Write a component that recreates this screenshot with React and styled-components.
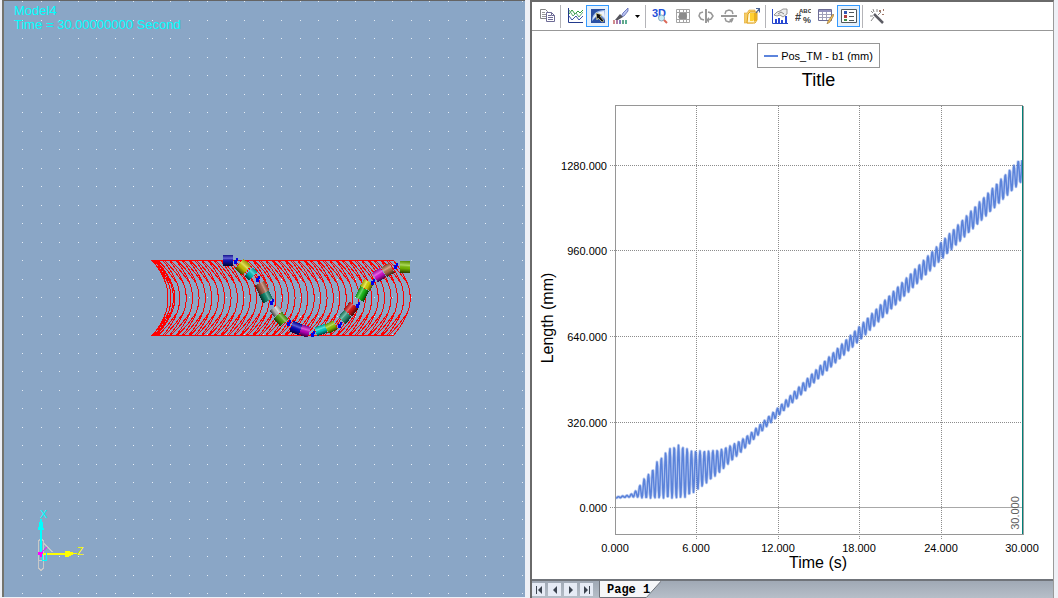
import React from 'react';
import styled, { createGlobalStyle } from 'styled-components';

const App = () => {
    return (
        <>
            <GlobalStyle />
            <Workspace>
                <ModelView />
                <PlotView />
            </Workspace>
        </>
    )
}

export default App;

/* ---------- model view ---------- */

const gridDots = [];
for (let row = 0; row < 33; row++) {
    for (let col = 0; col < 28; col++) {
        gridDots.push([Math.floor(22.5 + col * 18.5), Math.floor(1.5 + row * 18.5)]);
    }
}

// one turn of the helix: both strands share the middle and part towards the ends
const turn = (x0, bulge, spread) => {
    const points = [];
    for (let i = 0; i <= 48; i++) {
        const c = Math.cos((2 * Math.PI * i) / 48);
        const apart = Math.max(0, (Math.abs(c) - 0.4) / 0.6);
        const shift = i < 24 ? spread : spread * (1 - Math.pow(apart, 0.8) * 2);
        const x = x0 + shift + bulge * (1 - Math.pow(Math.abs(c), 1.9));
        points.push(`${x.toFixed(1)},${(298 - 37.5 * c).toFixed(1)}`);
    }
    return `M${points.join('L')}Z`;
}

const coil = Array.from({ length: 38 }, (_, k) => turn(154 + k * 6.4, 17, 2.5));
const coilStart = [
    turn(154, 13, 1),
    turn(154, 15, 2),
    turn(155, 19, 1),
];

const segments = [
    { x: 228, y: 260, w: 10, h: 11, r: 0, c: '#1010c0' },
    { x: 243, y: 267, w: 10, h: 13, r: 42, c: '#d8d000' },
    { x: 251, y: 274, w: 7, h: 12, r: 45, c: '#00c8c8' },
    { x: 262, y: 288, w: 11, h: 11, r: 63, c: '#b06850' },
    { x: 266, y: 297, w: 9, h: 11, r: 63, c: '#0f8c70' },
    { x: 276, y: 311, w: 8, h: 10, r: 55, c: '#c8c8c8' },
    { x: 281, y: 319, w: 10, h: 11, r: 48, c: '#58b010' },
    { x: 296, y: 328, w: 10, h: 11, r: 22, c: '#0808c8' },
    { x: 305, y: 331, w: 9, h: 11, r: 16, c: '#c800c8' },
    { x: 321, y: 330, w: 11, h: 9, r: -20, c: '#00d8d0' },
    { x: 331, y: 327, w: 10, h: 10, r: -28, c: '#90d000' },
    { x: 345, y: 317, w: 9, h: 10, r: -48, c: '#30a080' },
    { x: 351, y: 309, w: 10, h: 11, r: -52, c: '#e01818' },
    { x: 362, y: 294, w: 12, h: 10, r: -62, c: '#18c818' },
    { x: 367, y: 285, w: 8, h: 11, r: -62, c: '#e0e000' },
    { x: 379, y: 275, w: 10, h: 11, r: -32, c: '#e010d8' },
    { x: 388, y: 270, w: 9, h: 11, r: -30, c: '#c07850' },
    { x: 405, y: 267, w: 10, h: 12, r: 4, c: '#80c800' },
];

const joints = [
    [236, 261], [258, 279], [272, 302], [289, 323], [313, 334],
    [340, 325], [358, 305], [373, 282], [396, 266],
];

const ModelView = () => (
    <ModelPane>
        <ModelCaption>
            <p>Model4</p>
            <p>Time = 30.00000000 Second</p>
        </ModelCaption>
        <Scene viewBox="4 1 521 596" role="img" aria-label="Model4">
            <defs>
                <linearGradient id="shade" x1="0" y1="0" x2="0" y2="1">
                    <stop offset="0" stopColor="#000" stopOpacity="0.3" />
                    <stop offset="0.35" stopColor="#fff" stopOpacity="0.35" />
                    <stop offset="0.6" stopColor="#000" stopOpacity="0.1" />
                    <stop offset="1" stopColor="#000" stopOpacity="0.7" />
                </linearGradient>
            </defs>
            <g fill="#e4ecf4">
                {gridDots.map(([x, y]) => <rect key={`${x}-${y}`} x={x} y={y} width="1" height="1" />)}
            </g>
            <g fill="none" stroke="#ff0000" shapeRendering="crispEdges">
                {coil.map((d, i) => <path key={i} d={d} />)}
                {coilStart.map((d, i) => <path key={i} d={d} />)}
            </g>
            {segments.map(({ x, y, w, h, r, c }) => (
                <g key={`${x}-${y}`} transform={`translate(${x} ${y}) rotate(${r})`} shapeRendering="crispEdges">
                    <rect x={-w / 2} y={-h / 2} width={w} height={h} fill={c} />
                    <rect x={-w / 2} y={-h / 2} width={w} height={h} fill="url(#shade)" />
                </g>
            ))}
            <g fill="#0000e8" shapeRendering="crispEdges">
                {joints.map(([x, y]) => <path key={x} d={`M${x - 2} ${y - 1}h2v-2h2v3h-1v3h-3z`} />)}
            </g>
            <g fill="none" shapeRendering="crispEdges">
                <path d="M38.5 541v27l2 2h1l2-2v-27l-2-2h-1zM38.5 560.5h5M43.5 543l9 9" stroke="#c8c8c8" />
                <path d="M43 554h23" stroke="#ffff00" strokeWidth="2" />
                <path d="M65 551h3l6 2h3v1h-3l-6 3h-3z" fill="#ffff00" />
                <path d="M41 528v26" stroke="#00ffff" strokeWidth="2" />
                <path d="M40 519h2l1 6 1 5h-6l1-5z" fill="#00ffff" />
                <path d="M42.5 551v9h4v-7" stroke="#00ffff" />
                <path d="M41 553l6-6" stroke="#ff00ff" />
                <path d="M38 552h5v2h-1v3h-2v-2h-2z" fill="#ff00ff" />
            </g>
            <AxisName x="40" y="518" fill="#00ffff">X</AxisName>
            <AxisName x="77" y="555" fill="#ffff00">Z</AxisName>
        </Scene>
    </ModelPane>
)

/* ---------- plot view ---------- */

const envelope = [
    [616, 497, 498], [630, 495, 497], [637, 490, 497], [644, 479, 498],
    [652, 471, 498], [657, 462, 498], [662, 457, 498], [669, 449, 498],
    [678, 445, 498], [686, 448, 497], [691, 451, 494], [700, 451, 488],
    [710, 451, 480], [720, 450, 472], [730, 446, 462], [740, 441, 453],
    [750, 434, 443], [765, 420, 428], [779, 407, 415], [859, 327, 341],
    [957, 226, 244], [1022, 157, 181],
];

const bounds = (x) => {
    const i = Math.max(1, envelope.findIndex(([ex]) => ex >= x));
    const [x0, top0, low0] = envelope[i - 1];
    const [x1, top1, low1] = envelope[i];
    const t = (x - x0) / (x1 - x0);
    return [top0 + (top1 - top0) * t, low0 + (low1 - low0) * t];
}

const curve = [];
for (let x = 616; x <= 1022; x += 0.5) {
    const [top, low] = bounds(x);
    const wave = Math.cos(((x - 678.5) / 4.3) * 2 * Math.PI);
    curve.push(`${x},${((top + low) / 2 - ((low - top) / 2) * wave).toFixed(1)}`);
}
const curvePoints = curve.join(' ');

const yTicks = [['1280.000', 165], ['960.000', 250], ['640.000', 336], ['320.000', 422], ['0.000', 507]];
const xTicks = [['0.000', 615], ['6.000', 696], ['12.000', 778], ['18.000', 859], ['24.000', 941], ['30.000', 1022]];

const Chart = () => (
    <ChartSvg viewBox="532 92 521 487" role="img" aria-label="Length over time">
        <g stroke="#8c8c8c" strokeDasharray="1 1" shapeRendering="crispEdges">
            {yTicks.map(([label, y]) => <path key={label} d={`M610 ${y + 0.5}H1022`} />)}
            {xTicks.slice(1, 5).map(([label, x]) => <path key={label} d={`M${x + 0.5} 106V540`} />)}
        </g>
        <path d="M615 507.5H1022" stroke="#a8a8a8" />
        <rect x="615.5" y="105.5" width="407" height="429" fill="none" stroke="#969696" />
        <polyline points={curvePoints} fill="none" stroke="#6f93e2" strokeOpacity="0.45" strokeWidth="3" strokeLinejoin="round" />
        <polyline points={curvePoints} fill="none" stroke="#4a76d6" strokeOpacity="0.85" strokeWidth="1.5" strokeLinejoin="round" />
        <rect x="1023" y="106" width="1" height="429" fill="#a0a0a0" />
        <rect x="1022" y="106" width="1" height="428" fill="#008078" />
        <g textAnchor="end">
            {yTicks.map(([label, y]) => <TickLabel key={label} x="607" y={y + 5}>{label}</TickLabel>)}
        </g>
        <g textAnchor="middle">
            {xTicks.map(([label, x]) => <TickLabel key={label} x={x} y="552">{label}</TickLabel>)}
            <AxisTitle x="818" y="568">Time (s)</AxisTitle>
            <AxisTitle transform="translate(553 318) rotate(-90)">Length (mm)</AxisTitle>
            <CursorLabel transform="translate(1019 513) rotate(-90)">30.000</CursorLabel>
        </g>
    </ChartSvg>
)

const IconText = styled.text`
    font-family:"Liberation Sans", Arial, sans-serif;
    font-size:${({ $size }) => $size};
    font-weight:bold;
`

const icons = {
    copy: (
        <>
            <path d="M1.5 1.5h5l2 2v7h-7z" fill="#fff" stroke="#858585" />
            <path d="M3 4.5h3M3 6.5h4M3 8.5h4" stroke="#999" />
            <path d="M7.5 4.5h5l3 3v6h-8z" fill="#fff" stroke="#6e6c96" />
            <path d="M12.5 4.5v3h3M9 7.5h3M9 9.5h5M9 11.5h5" stroke="#6e6c96" />
        </>
    ),
    curves: (
        <>
            <path d="M1.5 0v14.5h14.5" stroke="#223a8c" />
            <path d="M2 6l3-4 3 4 3-3 2 2 3-3" stroke="#2c9c3c" />
            <path d="M2 2l4 6 3-3 3 4 4-5" stroke="#5fa878" />
            <path d="M2 8l3 4 4-4 3 4 4-4" stroke="#3c50a8" />
        </>
    ),
    select: (
        <>
            <path d="M1 1h14v14H1z" fill="#2a50a4" />
            <path d="M2 13C2 7 5 3 13 2l2 0v10L9 6z" fill="#9dbbe8" />
            <path d="M3 11C4 7 7 4 14 3l1 7-6-5z" fill="#eef4fc" />
            <path d="M6 5l6 2-2 1 4 5-2 1-4-4-1 2z" fill="#111" stroke="#fff2a0" strokeWidth="0.6" />
        </>
    ),
    brush: (
        <>
            <path d="M15 0l-5 5-2 4 3-1 4-5z" fill="#b9c3f0" stroke="#5964b4" strokeWidth="0.8" />
            <path d="M7 6l3 3-5 3H2z" fill="#54545c" />
            <path d="M0 12h2v4H0z" fill="#d08c8c" />
            <path d="M3 12h2v4H3z" fill="#b07aa8" />
            <path d="M6 12h2v4H6z" fill="#8080c0" />
            <path d="M9 12h2v4H9z" fill="#62a888" />
            <path d="M12 12h2v4h-2z" fill="#5cae94" />
        </>
    ),
    threeD: (
        <>
            <IconText x="0" y="9" $size="11px" fill="#2450d8">3D</IconText>
            <circle cx="9.5" cy="10" r="3" fill="#c8eef4" stroke="#88a8c0" />
            <path d="M12 12l3 3" stroke="#dc6858" strokeWidth="2" />
        </>
    ),
    fitPage: (
        <>
            <path d="M1.5 1.5h13v13h-13zM1.5 4.5h13M1.5 11.5h13M4.5 1.5v13M11.5 1.5v13M8.5 1.5v3M8.5 11.5v3" stroke="#a4a4a4" />
            <path d="M5 5h6l1 3-1 3H5L3 9z" fill="#8c8c8c" />
        </>
    ),
    flipX: (
        <>
            <path d="M8 1v14" stroke="#989898" strokeWidth="2" />
            <path d="M5 4L2 5 1 8l2 3 3 1M10 4l3 1 2 3-2 3-4 1" stroke="#989898" strokeWidth="1.5" />
            <path d="M8 12l3-3v6z" fill="#989898" />
        </>
    ),
    flipY: (
        <>
            <path d="M0 8h16" stroke="#989898" strokeWidth="2" />
            <path d="M4 6l1-3 3-1 3 1 1 3M4 10l1 3 3 1 3-1 1-3" stroke="#989898" strokeWidth="1.5" />
            <path d="M8 12l3-2v5z" fill="#989898" />
        </>
    ),
    box: (
        <>
            <path d="M0 5h3l2-3h6v10l-2 3H0z" fill="#f4cc68" stroke="#e0a838" strokeWidth="0.6" />
            <path d="M4 6l2-2h7v8l-2 3H3z" fill="#fff6d0" stroke="#e0a018" />
            <path d="M6 5h4v7l-1 1H6z" fill="#ffd030" />
            <path d="M10 5l3-1v8l-3 2z" fill="#e8b020" />
            <path d="M12 5l3-4M12 .5h3.5v4" stroke="#4a6494" strokeWidth="1.2" />
        </>
    ),
    histogram: (
        <>
            <path d="M.5 1v14.5H16" stroke="#2848c8" />
            <path d="M3 11h2v4H3zM6 10h2v5H6zM9 12h2v3H9zM13 8h2v7h-2z" fill="#2848d8" />
            <path d="M2 7l3-3 3-1 3-2h4v5l-4 3-3-2-3 1z" fill="#ececec" stroke="#808080" strokeWidth="0.8" />
            <path d="M6 6l3-2 3 2" stroke="#707070" strokeWidth="0.8" />
        </>
    ),
    format: (
        <>
            <IconText x="4" y="5" $size="6px" fill="#303030">ABC</IconText>
            <IconText x="0" y="13" $size="11px" fill="#404040">#</IconText>
            <IconText x="8" y="15" $size="9px" fill="#404040">%</IconText>
        </>
    ),
    table: (
        <>
            <path d="M.5 1.5h13v11H.5z" fill="#fff" stroke="#6c6c94" />
            <path d="M1 2h12v2H1z" fill="#9090bc" />
            <path d="M1 6.5h12M1 9.5h12M4.5 4v8M8.5 4v8" stroke="#a0a0b8" />
            <path d="M15 6l-5 7-1 3 3-2 4-7z" fill="#f0c058" stroke="#8c6830" strokeWidth="0.6" />
        </>
    ),
    legend: (
        <>
            <path d="M.5 1.5h15v13H.5z" fill="#fff" stroke="#50585c" />
            <path d="M3 3h3v3H3z" fill="#3458b4" />
            <path d="M3 7h3v3H3z" fill="#b04040" />
            <path d="M3 11h3v2H3z" fill="#409048" />
            <path d="M8 4.5h5M8 8.5h5M8 12.5h5" stroke="#50585c" />
        </>
    ),
    wand: (
        <>
            <path d="M5 6l9 9" stroke="#5c5c64" strokeWidth="2.5" />
            <path d="M1 8h3M8 1v3M2 3l2 2M2 13l3-4M12 4l-3 3M4 1l1 3" stroke="#888" />
            <path d="M10 2h2v2h-2zM14 1h1v2h-1zM13 6h2v1h-2z" fill="#a07868" />
        </>
    ),
}

const ToolButton = ({ icon, label, active }) => (
    <Tool type="button" aria-label={label} aria-pressed={active} $active={active}>
        <svg width="16" height="16" viewBox="0 0 16 16" fill="none">{icons[icon]}</svg>
    </Tool>
)

const PlotView = () => (
    <PlotPane>
        <Toolbar>
            <ToolButton icon="copy" label="Copy" />
            <Separator />
            <ToolButton icon="curves" label="Curves" />
            <ToolButton icon="select" label="Select" active />
            <ToolButton icon="brush" label="Palette" />
            <DropArrow type="button" aria-label="More palettes">
                <svg width="5" height="3" viewBox="0 0 5 3"><path d="M0 0h5L2.5 3z" /></svg>
            </DropArrow>
            <Separator />
            <ToolButton icon="threeD" label="View 3D" />
            <ToolButton icon="fitPage" label="Fit" />
            <ToolButton icon="flipX" label="Rotate about X" />
            <ToolButton icon="flipY" label="Rotate about Y" />
            <ToolButton icon="box" label="Cluster" />
            <Separator />
            <ToolButton icon="histogram" label="Chart properties" />
            <ToolButton icon="format" label="Number format" />
            <ToolButton icon="table" label="Data editor" />
            <ToolButton icon="legend" label="Legend" active />
            <Separator />
            <ToolButton icon="wand" label="Wizard" />
        </Toolbar>
        <PlotArea>
            <PlotHeader>
                <Legend>
                    <LegendLine />
                    Pos_TM - b1 (mm)
                </Legend>
                <PlotTitle>Title</PlotTitle>
            </PlotHeader>
            <Chart />
        </PlotArea>
        <PageBar>
            <PageNav>
                <NavButton type="button" aria-label="First page"><NavIcon viewBox="0 0 8 8"><path d="M1 0h1v8H1zM7 0v8L3 4z" /></NavIcon></NavButton>
                <NavButton type="button" aria-label="Previous page"><NavIcon viewBox="0 0 8 8"><path d="M6 0v8L2 4z" /></NavIcon></NavButton>
                <NavButton type="button" aria-label="Next page"><NavIcon viewBox="0 0 8 8"><path d="M2 0v8l4-4z" /></NavIcon></NavButton>
                <NavButton type="button" aria-label="Last page"><NavIcon viewBox="0 0 8 8"><path d="M6 0h1v8H6zM1 0v8l4-4z" /></NavIcon></NavButton>
            </PageNav>
            <PageTab type="button">
                <TabShape viewBox="0 0 63 17" preserveAspectRatio="none">
                    <path d="M0 0h63L48 17H0z" fill="#f6f7f9" />
                    <path d="M.5 0v16.5H48L63 0" fill="none" stroke="#6c7078" />
                </TabShape>
                <TabText>Page 1</TabText>
            </PageTab>
        </PageBar>
    </PlotPane>
)

/* ---------- styles ---------- */

const GlobalStyle = createGlobalStyle`
    * {
        box-sizing:border-box;
    }
    body {
        margin:0;
        background:#eef0f6;
        font-family:"Liberation Sans", Arial, sans-serif;
    }
    p, h1 {
        margin:0;
        font-weight:normal;
    }
    button {
        padding:0;
        border:0;
        background:none;
        font:inherit;
    }
`

const Workspace = styled.main`
    display:grid;
    grid-template-columns:525fr 533fr;
    min-height:100vh;
`

const ModelPane = styled.section`
    position:relative;
    margin:0 0 1px 2px;
    border-top:1px solid #646464;
    border-left:2px solid #74746e;
    background:#8aa6c6;
`

const ModelCaption = styled.div`
    position:absolute;
    top:3px;
    left:10px;
    color:#00ffff;
    font-size:13px;
    line-height:14px;
`

const Scene = styled.svg`
    display:block;
    width:100%;
`

const AxisName = styled.text`
    font-size:11px;
`

const PlotPane = styled.section`
    display:flex;
    flex-direction:column;
    min-width:0;
    margin:0 4px 0 5px;
    border-top:2px solid #6a6a6a;
    border-left:2px solid #6a6a6a;
    border-right:1px solid #9a9a9a;
    background:#fff;
`

const Toolbar = styled.div`
    display:flex;
    align-items:center;
    height:29px;
    padding-left:3px;
    border-bottom:1px solid #989898;
`

const Tool = styled.button`
    display:flex;
    align-items:center;
    width:23px;
    height:22px;
    padding-left:3px;
    border:1px solid ${({ $active }) => ($active ? '#3399ff' : 'transparent')};
    background:${({ $active }) => ($active ? '#e4f0fc' : 'transparent')};
`

const DropArrow = styled.button`
    display:flex;
    align-items:center;
    justify-content:center;
    width:11px;
    height:22px;
`

const Separator = styled.span`
    width:1px;
    height:23px;
    margin:0 2px;
    background:#b4b4b8;
`

const PlotArea = styled.div`
    flex:1;
`

const PlotHeader = styled.header`
    display:flex;
    flex-direction:column;
    align-items:center;
    padding:12px 0 0 52px;
`

const Legend = styled.div`
    display:flex;
    align-items:center;
    gap:3px;
    height:25px;
    padding:0 6px;
    border:1px solid #969696;
    font-size:11px;
`

const LegendLine = styled.span`
    width:14px;
    height:2px;
    background:#5c84dc;
`

const PlotTitle = styled.h1`
    font-size:18px;
    line-height:24px;
`

const ChartSvg = styled.svg`
    display:block;
    width:100%;
`

const TickLabel = styled.text`
    font-size:11px;
`

const AxisTitle = styled.text`
    font-size:16px;
`

const CursorLabel = styled.text`
    font-size:11px;
    fill:#606060;
`

const PageBar = styled.footer`
    display:flex;
    align-items:stretch;
    height:19px;
    border-top:2px solid #70747a;
    background:linear-gradient(#a0a9b5, #b6bec8);
`

const PageNav = styled.nav`
    display:flex;
    align-items:center;
    gap:3px;
    margin-right:6px;
`

const NavButton = styled.button`
    display:flex;
    align-items:center;
    justify-content:center;
    width:13px;
    height:13px;
    background:#e6ebf5;
`

const NavIcon = styled.svg`
    width:8px;
    height:8px;
    fill:#3c4450;
`

const PageTab = styled.button`
    position:relative;
    padding:0 11px 0 8px;
    font-family:"Liberation Mono", "Courier New", monospace;
    font-size:12px;
    font-weight:bold;
`

const TabShape = styled.svg`
    position:absolute;
    inset:0;
    width:100%;
    height:100%;
`

const TabText = styled.span`
    position:relative;
`
